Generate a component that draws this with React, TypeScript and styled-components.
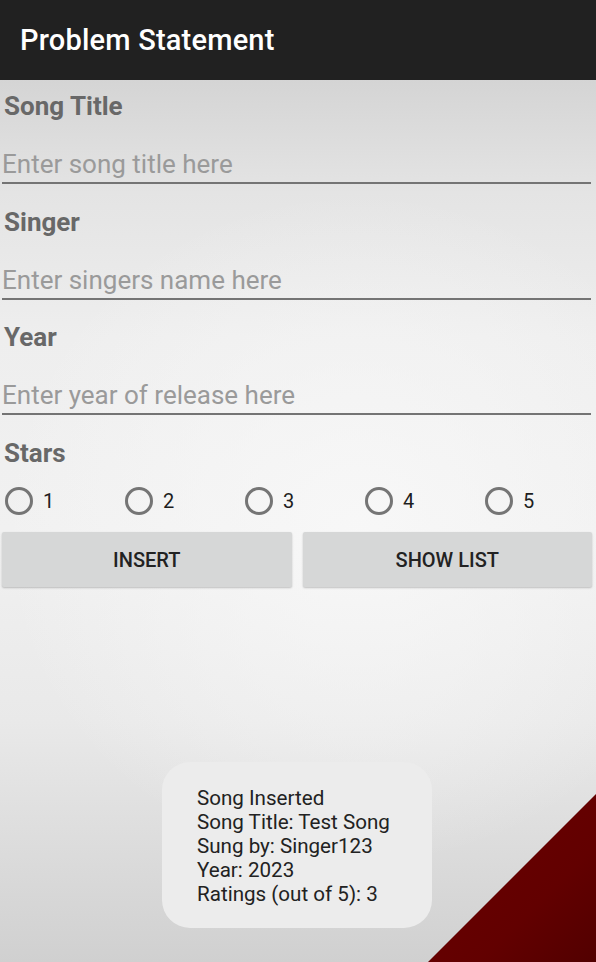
import React from "react";
import styled, { createGlobalStyle } from "styled-components";

const Global = createGlobalStyle`
  html, body { margin: 0; padding: 0; }
  body { font-family: Roboto, "Noto Sans", sans-serif; }
  * { box-sizing: border-box; }
`;

const Screen = styled.div`
  position: relative;
  width: 596px;
  height: 962px;
  overflow: hidden;
  background:
    radial-gradient(ellipse 60% 35% at 60% 55%, rgba(248, 248, 248, 0.9) 0%, rgba(248, 248, 248, 0) 100%),
    linear-gradient(180deg, #d4d4d4 8%, #e4e4e4 20%, #eeeeee 35%, #f1f1f1 55%, #e9e9e9 75%, #dadada 90%, #d0d0d0 100%);
  font-family: Roboto, sans-serif;
`;

const AppBar = styled.header`
  height: 80px;
  background: #212121;
  display: flex;
  align-items: center;
  padding-left: 20px;
`;

const Title = styled.h1`
  margin: 0;
  color: #ffffff;
  font-size: 29px;
  font-weight: 500;
  letter-spacing: 0.2px;
`;

const Form = styled.div`
  display: flex;
  flex-direction: column;
  padding-top: 6px;
  gap: 17.5px;
`;

const Field = styled.div`
  display: flex;
  flex-direction: column;
`;

const Label = styled.label`
  height: 40px;
  line-height: 40px;
  padding-left: 4px;
  font-size: 26px;
  font-weight: 700;
  color: #686868;
`;

const Input = styled.input`
  height: 58px;
  margin: 0 5px 0 2px;
  padding: 20px 0 0 0;
  border: none;
  border-bottom: 2px solid #747474;
  background: transparent;
  font-family: Roboto, sans-serif;
  font-size: 26px;
  color: #333;
  outline: none;
  &::placeholder { color: #9a9a9a; }
`;

const RadioRow = styled.div`
  display: flex;
  height: 40px;
  margin-top: 8px;
  padding-left: 5px;
`;

const RadioItem = styled.label`
  flex: 0 0 120px;
  display: flex;
  align-items: center;
  gap: 10px;
  font-size: 20px;
  color: #1e1e1e;
`;

const RadioCircle = styled.span`
  width: 28px;
  height: 28px;
  border-radius: 50%;
  border: 3px solid #757575;
`;

const ButtonRow = styled.div`
  display: flex;
  gap: 11px;
  margin-top: 11.5px;
  padding: 0 4px 0 2px;
`;

const Button = styled.button`
  flex: 1;
  height: 55px;
  border: none;
  border-radius: 2px;
  background: #d6d7d7;
  box-shadow: 0 1px 2px rgba(0, 0, 0, 0.22);
  font-family: Roboto, sans-serif;
  font-size: 20px;
  font-weight: 500;
  color: #222;
  text-transform: uppercase;
`;

const Corner = styled.div`
  position: absolute;
  right: 0;
  bottom: 0;
  width: 168px;
  height: 168px;
  clip-path: polygon(100% 0, 100% 100%, 0 100%);
  background: linear-gradient(315deg, #520000 0%, #620000 35%, #6c0000 100%);
`;

const Toast = styled.div`
  position: absolute;
  left: 162px;
  bottom: 34px;
  width: 270px;
  padding: 24px 20px 22px 35px;
  border-radius: 28px;
  background: #ececec;
  font-size: 20.6px;
  line-height: 24px;
  color: #222;
`;

const fields = [
  { label: "Song Title", placeholder: "Enter song title here" },
  { label: "Singer", placeholder: "Enter singers name here" },
  { label: "Year", placeholder: "Enter year of release here" },
];

export default function App() {
  return (
    <Screen>
      <Global />
      <AppBar>
        <Title>Problem Statement</Title>
      </AppBar>
      <Form>
        {fields.map((f) => (
          <Field key={f.label}>
            <Label>{f.label}</Label>
            <Input placeholder={f.placeholder} />
          </Field>
        ))}
        <Field>
          <Label>Stars</Label>
        </Field>
      </Form>
      <RadioRow>
        {[1, 2, 3, 4, 5].map((n) => (
          <RadioItem key={n}>
            <RadioCircle />
            {n}
          </RadioItem>
        ))}
      </RadioRow>
      <ButtonRow>
        <Button>Insert</Button>
        <Button>Show List</Button>
      </ButtonRow>
      <Corner />
      <Toast>
        Song Inserted
        <br />
        Song Title: Test Song
        <br />
        Sung by: Singer123
        <br />
        Year: 2023
        <br />
        Ratings (out of 5): 3
      </Toast>
    </Screen>
  );
}
